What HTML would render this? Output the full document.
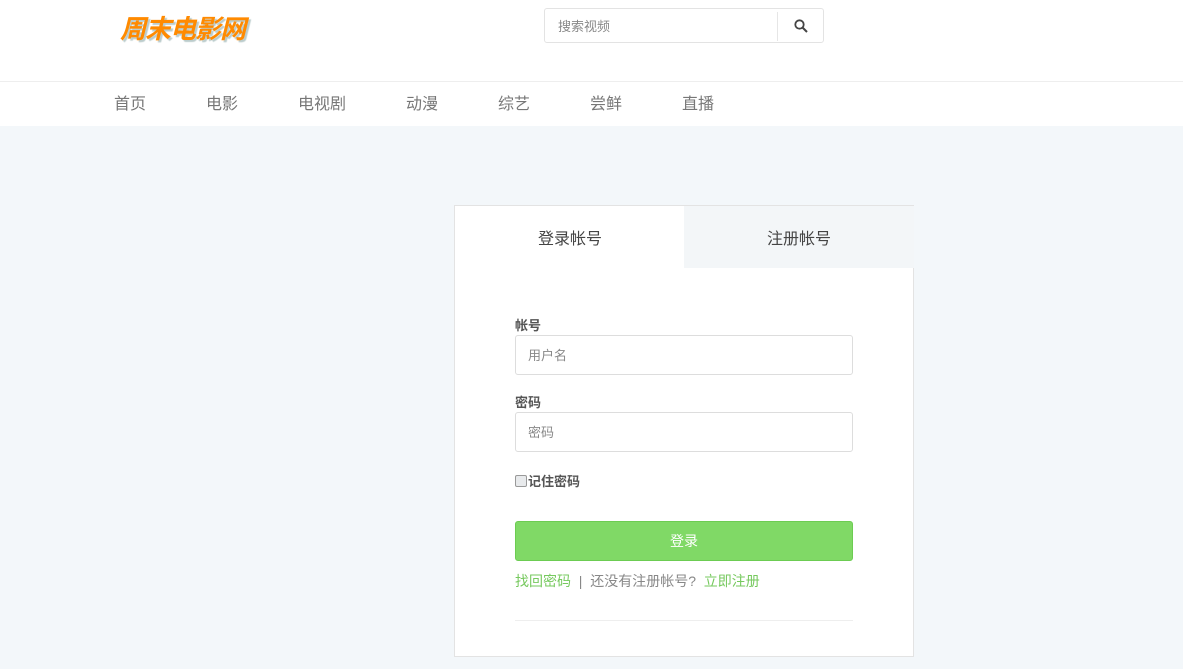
<!DOCTYPE html>
<html><head><meta charset="utf-8"><style>
*{margin:0;padding:0;box-sizing:border-box}
body{width:1183px;height:669px;overflow:hidden;background:#f3f7fa;font-family:"Liberation Sans","Noto Sans CJK SC",sans-serif;color:#333;position:relative}
.top{position:absolute;left:0;top:0;width:1183px;height:126px;background:#fff}
.logo{position:absolute;left:120px;top:9px;font-size:26px;font-weight:bold;font-style:italic;color:#ff8a00;text-shadow:2px 2px 1px #bcc;letter-spacing:-1px}
.search{position:absolute;left:544px;top:8px;width:280px;height:35px;border:1px solid #e3e3e3;border-radius:3px}
.search span{position:absolute;left:13px;top:7px;font-size:13px;color:#888}
.search i{position:absolute;left:232px;top:3px;width:1px;height:29px;background:#e6e6e6}
.line{position:absolute;left:0;top:81px;width:1183px;height:1px;background:#eee}
.nav a{position:absolute;top:90px;font-size:16px;color:#777}
.box{position:absolute;left:454px;top:205px;width:460px;height:452px;background:#fff;border:1px solid #e3e3e3}
.tab2{position:absolute;left:229px;top:0;width:230px;height:62px;background:#f3f6f8}
.t{position:absolute;font-size:16px;color:#444;top:19px}
.lbl{position:absolute;left:60px;font-size:13px;font-weight:bold;color:#555}
.inp{position:absolute;left:60px;width:338px;height:40px;border:1px solid #ddd;border-radius:3px;font-size:13px;color:#888;padding:9px 12px}
.btn{position:absolute;left:60px;top:315px;width:338px;height:40px;background:#80d966;border:1px solid #6ccc52;border-radius:3px;color:#fff;text-align:center;line-height:38px;font-size:14px}
.links{position:absolute;left:60px;top:365px;font-size:14px;color:#888}
.links b{font-weight:normal;color:#76c95e}
.hr{position:absolute;left:60px;top:414px;width:338px;height:1px;background:#eee}
.cb{display:inline-block;width:12px;height:12px;border:1px solid #999;border-radius:2px;background:#e8eaec;vertical-align:-1px;margin-right:1px}
</style></head><body>
<div class="top"></div>
<div class="logo">周末电影网</div>
<div class="search"><span>搜索视频</span><i></i>
<svg style="position:absolute;left:249px;top:10px" width="14" height="14" viewBox="0 0 14 14"><circle cx="5.5" cy="5.5" r="4.2" fill="none" stroke="#444" stroke-width="1.8"/><path d="M8.5 8.5L13 13" stroke="#444" stroke-width="2"/></svg></div>
<div class="line"></div>
<div class="nav"><a style="left:114px">首页</a><a style="left:206px">电影</a><a style="left:298px">电视剧</a><a style="left:406px">动漫</a><a style="left:498px">综艺</a><a style="left:590px">尝鲜</a><a style="left:682px">直播</a></div>
<div class="box">
<div class="tab2"></div>
<div class="t" style="left:83px">登录帐号</div>
<div class="t" style="left:312px">注册帐号</div>
<div class="lbl" style="top:109px">帐号</div>
<div class="inp" style="top:129px">用户名</div>
<div class="lbl" style="top:186px">密码</div>
<div class="inp" style="top:206px">密码</div>
<div class="lbl" style="top:265px"><span class="cb"></span>记住密码</div>
<div class="btn">登录</div>
<div class="links"><b>找回密码</b> &nbsp;|&nbsp; 还没有注册帐号? &nbsp;<b>立即注册</b></div>
<div class="hr"></div>
</div>
</body></html>
